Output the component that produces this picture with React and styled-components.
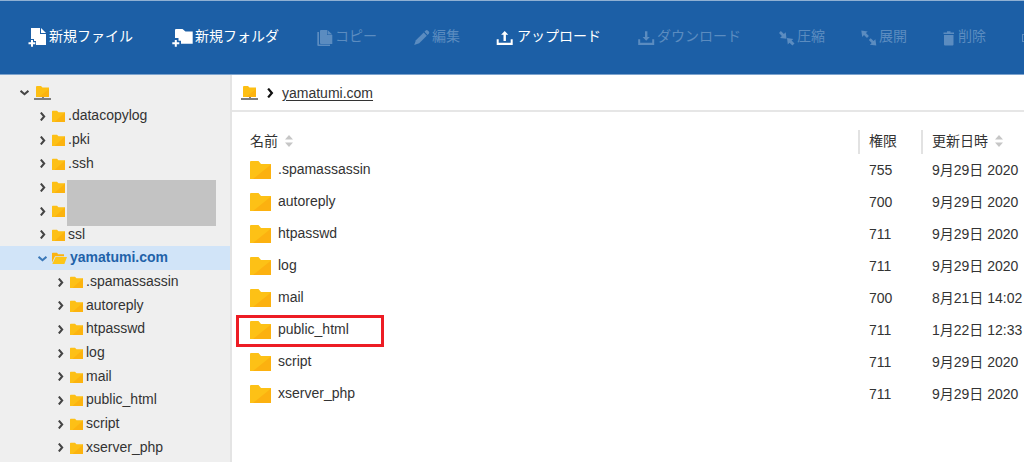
import React, { useState } from 'react'
import styled, { createGlobalStyle, css } from 'styled-components'

const toolbarItems = [
  { icon: 'newFile', width: 21, label: '新規ファイル', enabled: true },
  { icon: 'newFolder', width: 26, label: '新規フォルダ', enabled: true },
  { icon: 'copy', width: 20, label: 'コピー' },
  { icon: 'edit', width: 19, label: '編集' },
  { icon: 'upload', width: 21, label: 'アップロード', enabled: true },
  { icon: 'download', width: 20, label: 'ダウンロード' },
  { icon: 'compress', width: 20, label: '圧縮' },
  { icon: 'expand', width: 18, label: '展開' },
  { icon: 'trash', width: 15, label: '削除' },
  { icon: 'rename', width: 18, label: '' },
]

const treeItems = [
  { id: 1, depth: 0, kind: 'server', open: true },
  { id: 2, depth: 1, name: '.datacopylog' },
  { id: 3, depth: 1, name: '.pki' },
  { id: 4, depth: 1, name: '.ssh' },
  { id: 5, depth: 1, masked: true },
  { id: 6, depth: 1 },
  { id: 7, depth: 1, name: 'ssl' },
  { id: 8, depth: 1, name: 'yamatumi.com', kind: 'open', open: true },
  { id: 9, depth: 2, name: '.spamassassin' },
  { id: 10, depth: 2, name: 'autoreply' },
  { id: 11, depth: 2, name: 'htpasswd' },
  { id: 12, depth: 2, name: 'log' },
  { id: 13, depth: 2, name: 'mail' },
  { id: 14, depth: 2, name: 'public_html' },
  { id: 15, depth: 2, name: 'script' },
  { id: 16, depth: 2, name: 'xserver_php' },
]

const files = [
  { name: '.spamassassin', mode: '755', date: '9月29日 2020' },
  { name: 'autoreply', mode: '700', date: '9月29日 2020' },
  { name: 'htpasswd', mode: '711', date: '9月29日 2020' },
  { name: 'log', mode: '711', date: '9月29日 2020' },
  { name: 'mail', mode: '700', date: '8月21日 14:02' },
  { name: 'public_html', mode: '711', date: '1月22日 12:33', marked: true },
  { name: 'script', mode: '711', date: '9月29日 2020' },
  { name: 'xserver_php', mode: '711', date: '9月29日 2020' },
]

// Toolbar drawings, all 20px high
const shapes = {
  newFile: (
    <>
      <path d="M3 1h9v6h6v11H8v-4H6v-2H3z" />
      <path d="M13 1l5 5h-5z" />
      <path d="M3 13h2v2.3h2.3v2H5v2.4H3v-2.4H.5v-2H3z" />
    </>
  ),
  newFolder: (
    <>
      <path d="M7 2h6.5l3 2.5h7.2v12.2H12v-3H9.500V11H6V3a1 1 0 0 1 1-1z" />
      <path d="M5.800 13h2v2.300h2.500v2H7.800v2.400h-2v-2.400H3.300v-2h2.500z" />
    </>
  ),
  copy: (
    <>
      <path d="M6 3h6v5h5.300v9H6a1 1 0 0 1-1-1V4a1 1 0 0 1 1-1z" />
      <path d="M12.500 3l4.800 4.500h-4.800z" />
      <path d="M2.300 5h1.700v12.500h11v1.500H3.300a1 1 0 0 1-1-1z" />
    </>
  ),
  edit: (
    <>
      <path d="M12.700 3.600a1.500 1.500 0 0 1 2.100 0l1 1a1.500 1.500 0 0 1 0 2.100l-1.200 1.200-3.100-3.100z" />
      <path d="M10.700 5.600l3.100 3.100-7.600 7.600L1.200 18l1.700-4.700z" />
    </>
  ),
  upload: (
    <>
      <path d="M8.700 4l3.600 3.700H9.900V14H7.500V7.700H5.100z" />
      <path d="M.7 12.300h2v3.500h12v-3.500h2V18H.7z" />
    </>
  ),
  download: (
    <>
      <path d="M9.200 13.800l3.600-3.700h-2.400V4.300H8v5.800H5.600z" />
      <path d="M1.200 12.300h2v3.500h12v-3.500h2V18h-16z" />
    </>
  ),
  compress: (
    <>
      <path d="M3.900 4l3 3 1.800-1.700.8 6.400-6.400-.8 1.800-1.800-2.900-3z" />
      <path d="M15.400 18.600l-2.900-2.900-1.700 1.800-.8-6.400 6.400.8-1.800 1.700 2.900 2.900z" />
    </>
  ),
  expand: (
    <>
      <path d="M.3 3.600l6.400.8-1.800 1.700 3 3L6 11 3 8.100 1.200 9.900z" />
      <path d="M15.300 18.500l-6.400-.8 1.800-1.700-2.900-2.900 1.900-1.900 2.900 2.900 1.800-1.800z" />
    </>
  ),
  trash: (
    <path d="M4 4.300h3.500v1.100H11v1.600H.5V5.400H4zM1 8h9.500v9.600a1 1 0 0 1-1 1H2a1 1 0 0 1-1-1z" />
  ),
  rename: <path d="M0 7h14v8H0zM1 8v6h12V8z" fillRule="evenodd" />,
}

const ToolIcon = ({ name, width }) => (
  <svg width={width} height="20" viewBox={`0 0 ${width} 20`} fill="currentColor" aria-hidden="true">
    {shapes[name]}
  </svg>
)

const ServerIcon = () => (
  <svg width="17" height="16" viewBox="0 0 17 16" aria-hidden="true">
    <path d="M2 2a1 1 0 0 1 1-1h4l1.500 1.500H15V12H2z" fill="#fdbf14" />
    <path d="M15 4v8H5z" fill="#fcb30f" />
    <path d="M8 12h2v1H8zM0 13h17v2H0z" fill="#7d7d7d" />
  </svg>
)

const FolderIcon = () => (
  <svg width="13" height="12" viewBox="0 0 13 12" aria-hidden="true">
    <path d="M0 1.500a.7.7 0 0 1 .7-.7H5l1.500 1.500H13V12H0z" fill="#fdc016" />
    <path d="M13 2.500V12H2.500z" fill="#fcb30f" />
  </svg>
)

const OpenFolderIcon = () => (
  <svg width="15" height="12" viewBox="0 0 15 12" aria-hidden="true">
    <path d="M0 1.500a.7.7 0 0 1 .7-.7H5l1.200 1.400H12v2H3L0 10.500z" fill="#fcb30f" />
    <path d="M3.600 5H15l-2.600 7H.3z" fill="#fdc61a" />
  </svg>
)

const LargeFolderIcon = () => (
  <svg width="21" height="18" viewBox="0 0 21 18" aria-hidden="true">
    <path d="M0 1a1 1 0 0 1 1-1h7.500L11 3h10v15H0z" fill="#fdc116" />
    <path d="M21 3.500V18H3z" fill="#fcb110" />
  </svg>
)

const Chevron = ({ down, size = 9 }) => (
  <svg width={size} height={size} viewBox="0 0 8 8" fill="none" stroke="currentColor" strokeWidth="1.800" aria-hidden="true">
    <path d={down ? 'M.5 2.500L4 5.500l3.500-3' : 'M2.500 .5L5.500 4l-3 3.500'} />
  </svg>
)

const SortIcon = () => (
  <svg width="8" height="12" viewBox="0 0 8 12" fill="#c6c6c6" aria-hidden="true">
    <path d="M4 0l4 4.500H0zM0 7.500h8L4 12z" />
  </svg>
)

const App = () => {
  const [selected, setSelected] = useState(8)

  const renderIcon = (kind) => {
    if (kind === 'server') return <ServerIcon />
    if (kind === 'open') return <OpenFolderIcon />
    return <FolderIcon />
  }

  return (
    <Page>
      <GlobalStyle />
      <Toolbar>
        {toolbarItems.map((item) => (
          <ToolButton
            key={item.icon}
            type="button"
            disabled={!item.enabled}
            aria-label={item.label || '名前変更'}
          >
            <ToolIcon name={item.icon} width={item.width} />
            <ToolLabel>{item.label}</ToolLabel>
          </ToolButton>
        ))}
      </Toolbar>
      <Body>
        <Sidebar>
          <Tree>
            {treeItems.map((item) => (
              <TreeRow key={item.id} $depth={item.depth} $selected={item.id === selected}>
                <TreeButton type="button" aria-expanded={!!item.open} onClick={() => setSelected(item.id)}>
                  <ChevronSlot $selected={item.id === selected}>
                    <Chevron down={item.open} />
                  </ChevronSlot>
                  {renderIcon(item.kind)}
                  <TreeName>{item.name}</TreeName>
                </TreeButton>
                {item.masked && <Mask />}
              </TreeRow>
            ))}
          </Tree>
        </Sidebar>
        <Main>
          <Breadcrumb>
            <ServerIcon />
            <Chevron size={10} />
            <a href="#yamatumi.com">yamatumi.com</a>
          </Breadcrumb>
          <FileTable>
            <thead>
              <tr>
                <NameHead>
                  <SortButton type="button">名前 <SortIcon /></SortButton>
                </NameHead>
                <ModeHead>権限</ModeHead>
                <DateHead>
                  <SortButton type="button">更新日時 <SortIcon /></SortButton>
                </DateHead>
              </tr>
            </thead>
            <tbody>
              {files.map((file) => (
                <tr key={file.name}>
                  <NameCell>
                    <FileName>
                      <LargeFolderIcon />
                      <span>{file.name}</span>
                    </FileName>
                    {file.marked && <Marker />}
                  </NameCell>
                  <Cell>{file.mode}</Cell>
                  <Cell>{file.date}</Cell>
                </tr>
              ))}
            </tbody>
          </FileTable>
        </Main>
      </Body>
    </Page>
  )
}

// Styled Components

const GlobalStyle = createGlobalStyle`
  * {
    box-sizing: border-box;
  }

  body {
    margin: 0;
    overflow: hidden;
    background: #fff;
    color: #333;
    font-family: "Liberation Sans", "Noto Sans CJK JP", sans-serif;
    font-size: 14px;
  }

  svg {
    display: block;
    flex: none;
  }
`

const plainButton = css`
  display: flex;
  align-items: center;
  padding: 0;
  border: 0;
  background: none;
  color: inherit;
  font: inherit;
  white-space: nowrap;
`

const Page = styled.div`
  display: flex;
  flex-direction: column;
  min-height: 100vh;
`

const Toolbar = styled.header`
  display: flex;
  gap: 36px;
  padding: 24px 0 26px 28px;
  border-top: 1px solid #8fb0d3;
  border-bottom: 1px solid #7da3cd;
  background: #1c5fa6;
  overflow: hidden;
`

const ToolButton = styled.button`
  ${plainButton}
  flex: none;
  height: 23px;
  color: #fff;

  &:disabled {
    color: #5b8cc0;
  }
`

const ToolLabel = styled.span`
  padding-bottom: 3px;
`

const Body = styled.div`
  display: flex;
  flex: 1;
`

const Sidebar = styled.nav`
  flex: 0 0 232px;
  padding-top: 6px;
  border-right: 2px solid #e4e4e4;
  background: #efefef;
`

const Tree = styled.ul`
  margin: 0;
  padding: 0;
  list-style: none;
`

const TreeRow = styled.li`
  position: relative;
  height: 24px;
  padding-left: ${(props) => 16 + props.$depth * 18}px;
  background: ${(props) => (props.$selected ? '#d1e4f8' : 'transparent')};
  color: ${(props) => (props.$selected ? '#1f62a9' : '#333')};
  font-weight: ${(props) => (props.$selected ? 700 : 400)};

  &:nth-child(3n + 1) {
    height: 23px;
  }
`

const TreeButton = styled.button`
  ${plainButton}
  height: 100%;
`

const ChevronSlot = styled.span`
  display: flex;
  justify-content: center;
  width: 16px;
  margin-right: 2px;
  color: ${(props) => (props.$selected ? '#3b78b8' : '#444')};
`

const TreeName = styled.span`
  margin-left: 3px;
  padding-bottom: 2px;
`

const Mask = styled.div`
  position: absolute;
  top: 5px;
  left: 67px;
  width: 149px;
  height: 46px;
  background: #c3c3c3;
  z-index: 1;
`

const Main = styled.main`
  flex: 1;
  min-width: 0;
`

const Breadcrumb = styled.div`
  display: flex;
  align-items: center;
  gap: 7px;
  height: 37px;
  padding-left: 9px;
  border-bottom: 2px solid #e6e6e6;
  color: #111;

  a {
    color: #333;
    text-underline-offset: 2px;
  }
`

const FileTable = styled.table`
  width: 100%;
  margin-top: 18px;
  border-spacing: 0;
  table-layout: fixed;
`

const HeadCell = styled.th`
  height: 24px;
  padding: 0 0 2px 9px;
  border-left: 2px solid #e2e2e2;
  font-weight: 400;
  line-height: 20px;
  text-align: left;
  white-space: nowrap;
`

const NameHead = styled(HeadCell)`
  padding-left: 18px;
  border-left: 0;
`

const ModeHead = styled(HeadCell)`
  width: 63px;
`

const DateHead = styled(HeadCell)`
  width: 103px;
`

const SortButton = styled.button`
  ${plainButton}
  gap: 7px;
`

const Cell = styled.td`
  height: 32px;
  padding: 0 0 0 11px;
  line-height: 20px;
  white-space: nowrap;
`

const NameCell = styled(Cell)`
  position: relative;
  padding-left: 18px;
`

const FileName = styled.div`
  display: flex;
  align-items: center;
  gap: 7px;

  span {
    padding-bottom: 2px;
  }
`

const Marker = styled.div`
  position: absolute;
  top: 1px;
  left: 4px;
  width: 148px;
  height: 32px;
  border: 3px solid #ed1c24;
`

export default App
